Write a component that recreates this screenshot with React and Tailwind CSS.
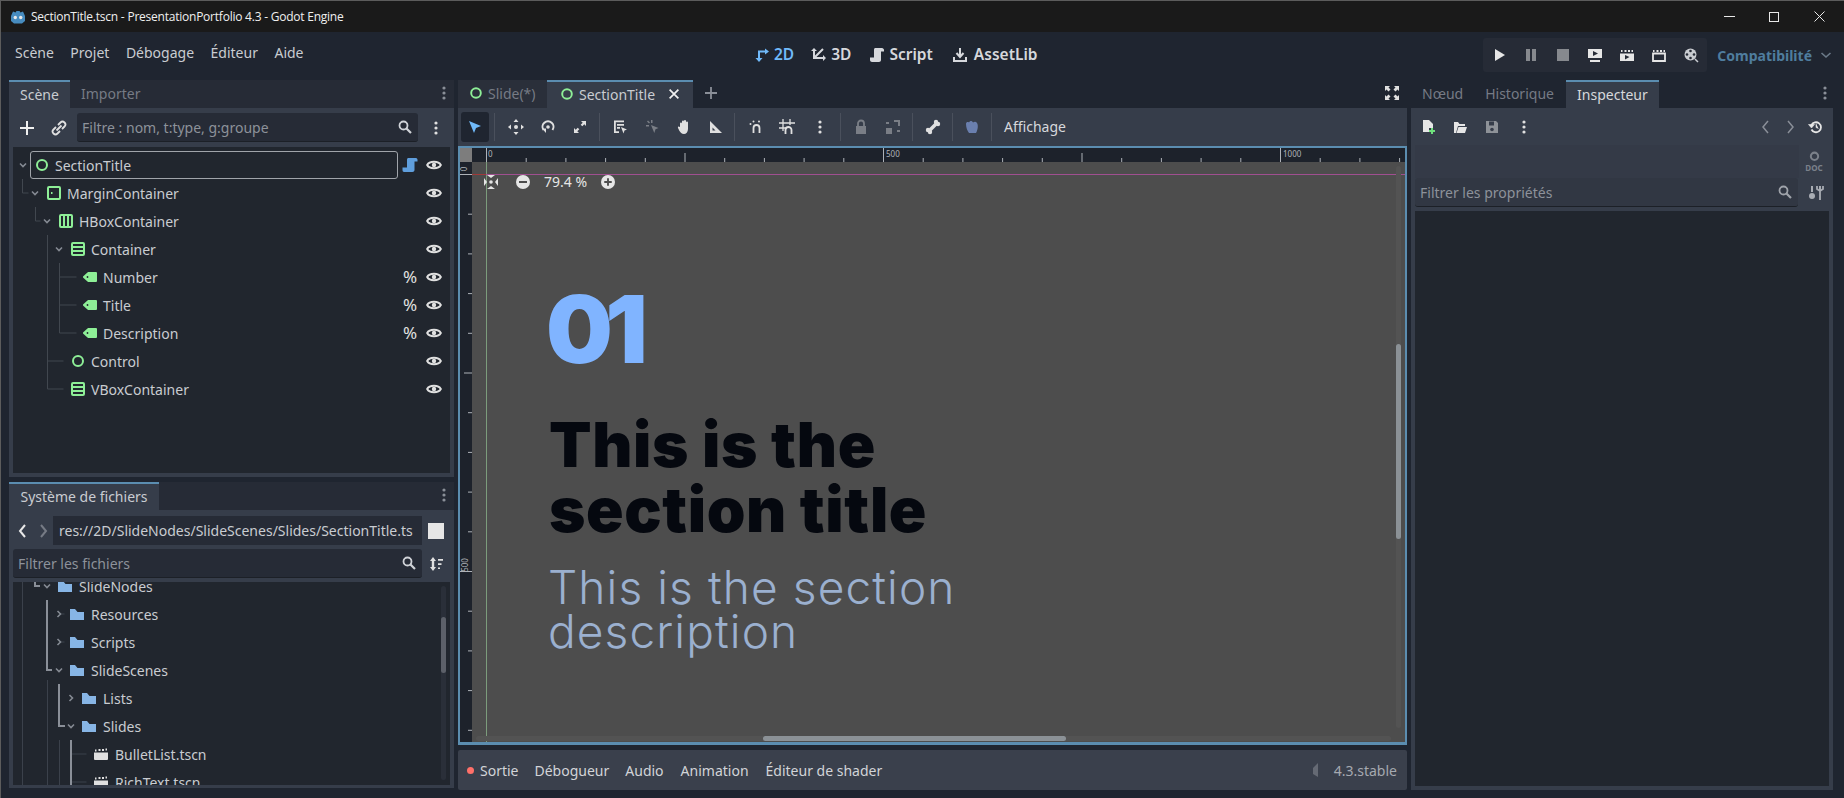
const GREEN = '#8eef97';

const Icon = ({ size = 16, className = '', children }) => (
  <svg width={size} height={size} viewBox="0 0 16 16" className={`shrink-0 ${className}`}>
    {children}
  </svg>
);

// node icons from the scene tree
const NodeCircle = () => (
  <Icon><circle cx="8" cy="8" r="5" fill="none" stroke={GREEN} strokeWidth="2" /></Icon>
);
const MarginIcon = () => (
  <Icon>
    <rect x="2" y="2" width="12" height="12" rx="1" fill="none" stroke={GREEN} strokeWidth="2" />
    <rect x="5" y="7" width="1.5" height="2" fill={GREEN} />
  </Icon>
);
const HBoxIcon = () => (
  <Icon>
    <rect x="2" y="2" width="12" height="12" rx="1" fill="none" stroke={GREEN} strokeWidth="2" />
    <path d="M6 2v12M10 2v12" stroke={GREEN} strokeWidth="2" />
  </Icon>
);
const VBoxIcon = () => (
  <Icon>
    <rect x="2" y="2" width="12" height="12" rx="1" fill="none" stroke={GREEN} strokeWidth="2" />
    <path d="M2 6h12M2 10h12" stroke={GREEN} strokeWidth="2" />
  </Icon>
);
const LabelIcon = () => (
  <Icon>
    <path d="M6 3h8a1 1 0 0 1 1 1v8a1 1 0 0 1-1 1H6L1 8.5V7.5z" fill={GREEN} />
    <circle cx="5.5" cy="8" r="0.9" fill="#21262e" />
  </Icon>
);
const Eye = () => (
  <Icon>
    <path d="M1.2 8C3.4 3.700 12.600 3.700 14.800 8 12.600 12.300 3.400 12.300 1.200 8z" fill="none" stroke="#e0e0e0" strokeWidth="2" />
    <circle cx="8" cy="8" r="2.200" fill="#e0e0e0" />
  </Icon>
);
const ScriptBlue = () => (
  <Icon>
    <path d="M6 1h8c1 0 1.500 1 1.500 2v1.500h-3V13c0 1-1 2-2 2H2c-1 0-1.500-1-1.500-2v-2.500H5V3c0-1 .4-2 1-2z" fill="#5f9edc" />
  </Icon>
);
const Folder = () => (
  <Icon>
    <path d="M1 3h5l2.500 3H15v8H1z" fill="#87b5e5" />
  </Icon>
);
const Clapper = () => (
  <Icon>
    <path d="M1 6.500h14V13a1 1 0 0 1-1 1H2a1 1 0 0 1-1-1z" fill="#e0e0e0" />
    <path d="M2 3.500h1.500v2H2zM5.500 3h2v2h-2zM9 3h2v2H9zM12.500 2.500H14v2h-1.500z" fill="#e0e0e0" />
  </Icon>
);
const Search = ({ color = '#d0d3d8' }) => (
  <Icon>
    <circle cx="6.500" cy="6.500" r="4" fill="none" stroke={color} strokeWidth="1.800" />
    <path d="M9.500 9.500 14 14" stroke={color} strokeWidth="2.200" />
  </Icon>
);
const Kebab = ({ color = '#e0e0e0' }) => (
  <Icon>
    <circle cx="8" cy="3" r="1.600" fill={color} />
    <circle cx="8" cy="8" r="1.600" fill={color} />
    <circle cx="8" cy="13" r="1.600" fill={color} />
  </Icon>
);
const Chevron = ({ open }) => (
  <svg width="10" height="10" viewBox="0 0 10 10" className="shrink-0">
    <path d={open ? 'M2 3.500 5 6.500 8 3.500' : 'M3.500 2 6.500 5 3.500 8'} fill="none" stroke="#858a93" strokeWidth="1.600" />
  </svg>
);

const sceneRows = [
  { name: 'SectionTitle', depth: 0, icon: NodeCircle, open: true, script: true },
  { name: 'MarginContainer', depth: 1, icon: MarginIcon, open: true },
  { name: 'HBoxContainer', depth: 2, icon: HBoxIcon, open: true },
  { name: 'Container', depth: 3, icon: VBoxIcon, open: true },
  { name: 'Number', depth: 4, icon: LabelIcon, percent: true },
  { name: 'Title', depth: 4, icon: LabelIcon, percent: true },
  { name: 'Description', depth: 4, icon: LabelIcon, percent: true },
  { name: 'Control', depth: 3, icon: NodeCircle },
  { name: 'VBoxContainer', depth: 3, icon: VBoxIcon },
];

const fileRows = [
  { name: 'SlideNodes', depth: 2, icon: Folder, open: true },
  { name: 'Resources', depth: 3, icon: Folder, closed: true },
  { name: 'Scripts', depth: 3, icon: Folder, closed: true },
  { name: 'SlideScenes', depth: 3, icon: Folder, open: true },
  { name: 'Lists', depth: 4, icon: Folder, closed: true },
  { name: 'Slides', depth: 4, icon: Folder, open: true },
  { name: 'BulletList.tscn', depth: 5, icon: Clapper },
  { name: 'RichText.tscn', depth: 5, icon: Clapper },
];

const SceneRow = ({ row }) => {
  const RowIcon = row.icon;
  return (
    <div className="flex h-[28px] items-center" style={{ paddingLeft: 5 + row.depth * 12 }}>
      <span className="mr-[2px] flex w-[10px] justify-center">
        {(row.open || row.closed) && <Chevron open={row.open} />}
      </span>
      <div className={`flex h-[28px] flex-1 items-center gap-[5px] rounded-[3px] border pl-[3px] ${row.depth === 0 ? 'border-[#a0a4aa]' : 'border-transparent'}`}>
        <RowIcon />
        <span className="text-[14px] text-[#c9ccd1]">{row.name}</span>
      </div>
      <div className="flex w-[52px] items-center">
        <span className="flex w-[24px] justify-center text-[17px] text-[#e0e0e0]">
          {row.percent && '%'}
          {row.script && <ScriptBlue />}
        </span>
        <span className="flex w-[24px] justify-center"><Eye /></span>
      </div>
    </div>
  );
};

const FileRow = ({ row }) => {
  const RowIcon = row.icon;
  return (
    <div className="flex h-[28px] items-center" style={{ paddingLeft: 5 + row.depth * 12 }}>
      <span className="mr-[5px] flex w-[10px] justify-center">
        {(row.open || row.closed) && <Chevron open={row.open} />}
      </span>
      <RowIcon />
      <span className="ml-[6px] text-[14px] text-[#c9ccd1]">{row.name}</span>
    </div>
  );
};

const SearchInput = ({ placeholder, className, iconColor }) => (
  <div className={`flex items-center justify-between rounded-[3px] border-b border-[#1c2027] px-[5px] ${className}`}>
    <span className="text-[14px] text-[#8d929a]">{placeholder}</span>
    <Search color={iconColor} />
  </div>
);

// the top-left scene dock
const SceneDock = () => (
  <section className="flex h-[397px] flex-col">
    <div className="flex h-[28px] shrink-0 items-center bg-[#262b36]">
      <div className="flex h-full w-[61px] items-center justify-center border-t-2 border-[#5b8db0] bg-[#363d4a] pb-[2px] text-[14px] text-[#c9ccd1]">Scène</div>
      <span className="mb-[2px] ml-[11px] text-[14px] text-[#767b85]">Importer</span>
      <span className="mb-[2px] ml-auto mr-[2px]"><Kebab color="#8a8f98" /></span>
    </div>
    <div className="flex min-h-0 flex-1 flex-col bg-[#363d4a] px-[4px] pb-[4px]">
      <div className="flex h-[39px] shrink-0 items-center">
        <span className="ml-[6px] w-[16px]">
          <Icon><path d="M8 1v14M1 8h14" stroke="#f0f0f0" strokeWidth="2" /></Icon>
        </span>
        <span className="ml-[16px]">
          <Icon>
            <path d="M7 5 9.500 2.500a2.800 2.800 0 0 1 4 4L11 9M9 11l-2.500 2.500a2.800 2.800 0 0 1-4-4L5 7M5.500 10.500l5-5" fill="none" stroke="#e0e0e0" strokeWidth="1.800" />
          </Icon>
        </span>
        <SearchInput placeholder="Filtre : nom, t:type, g:groupe" className="ml-[10px] h-[29px] w-[341px] bg-[#262b36]" />
        <span className="ml-[10px]"><Kebab /></span>
      </div>
      <div className="relative flex-1 bg-[#21262e]">
        <svg className="absolute left-0 top-0" width="437" height="326" viewBox="13 147 437 326" fill="none" stroke="#41474f">
          <path d="M22.500 179v14h6M35.500 207v14h5M47.500 235v154h16M47.500 361h16M59.500 263v70h17M59.500 277h17M59.500 305h17" />
        </svg>
        <div className="relative pt-[4px]">
          {sceneRows.map((row) => (
            <SceneRow key={row.name} row={row} />
          ))}
        </div>
      </div>
    </div>
  </section>
);

// bottom-left file system dock
const FileDock = () => (
  <section className="flex h-[306px] flex-col">
    <div className="flex h-[28px] shrink-0 items-center bg-[#262b36]">
      <div className="flex h-full w-[150px] items-center justify-center border-t-2 border-[#5b8db0] bg-[#363d4a] pb-[2px] text-[14px] text-[#c9ccd1]">Système de fichiers</div>
      <span className="mb-[2px] ml-auto mr-[2px]"><Kebab color="#8a8f98" /></span>
    </div>
    <div className="flex min-h-0 flex-1 flex-col bg-[#363d4a] px-[4px] pb-[3px]">
      <div className="mt-[6px] flex h-[29px] shrink-0 items-center">
        <svg width="40" height="16" viewBox="0 0 40 16" className="shrink-0">
          <path d="M12 2 7 8l5 6" fill="none" stroke="#e8e8e8" strokeWidth="2" />
          <path d="M28 2l5 6-5 6" fill="none" stroke="#767b85" strokeWidth="2" />
        </svg>
        <div className="flex h-[29px] w-[369px] items-center overflow-hidden whitespace-nowrap bg-[#262b36] pl-[6px] text-[14px] text-[#c9ccd1]">res://2D/SlideNodes/SlideScenes/Slides/SectionTitle.ts</div>
        <span className="ml-[6px] h-[16px] w-[16px] bg-[#e6e6e6]" />
      </div>
      <div className="mt-[4px] flex h-[29px] shrink-0 items-center">
        <SearchInput placeholder="Filtrer les fichiers" className="h-[29px] w-[409px] bg-[#262b36]" />
        <span className="ml-[6px]">
          <Icon>
            <path d="M5 1 8 5H6.200v6H8l-3 4-3-4h1.800V5H2z" fill="#e0e0e0" />
            <path d="M10 3h5v1.700h-5zM10 7.200h3.500v1.700H10zM10 11.400h2v1.700h-2z" fill="#e0e0e0" />
          </Icon>
        </span>
      </div>
      <div className="relative mt-[4px] min-h-0 flex-1 overflow-hidden bg-[#21262e]">
        <svg className="absolute left-0 top-0" width="437" height="203" viewBox="13 582 437 203" fill="none">
          <path d="M22.500 582v203M47.500 680v105M59.500 740v45M59.500 614h5M59.500 642h5M71.500 754h15M71.500 782h15" stroke="#3b414b" />
          <path d="M35 582v4h5M47 600v70h5M59 684v42h6M71 740v45" stroke="#8a8f98" strokeWidth="2" />
        </svg>
        <div className="relative -mt-[10px]">
          {fileRows.map((row) => (
            <FileRow key={row.name} row={row} />
          ))}
        </div>
        <div className="absolute right-[4px] top-[4px] h-[194px] w-[5px] rounded-full bg-[#2a2f39]">
          <div className="mt-[31px] h-[56px] w-[5px] rounded-full bg-[#5c6069]" />
        </div>
      </div>
    </div>
  </section>
);

const ToolIcon = ({ x, dim, children }) => (
  <span className={`flex h-[16px] w-[16px] ${dim ? 'opacity-40' : ''}`} style={{ marginLeft: x }}>
    <Icon>{children}</Icon>
  </span>
);

const Sep = ({ x }) => <span className="h-[28px] w-px bg-[#4a505c]" style={{ marginLeft: x }} />;

const f = '#e0e0e0';

const ViewToolbar = () => (
  <div className="flex h-[38px] items-center bg-[#363d4a]">
    <span className="ml-[3px] flex h-[30px] w-[28px] items-center justify-center rounded-[3px] bg-[#1f2530]">
      <Icon><path d="M2 2l12 5-5 2-2 5z" fill="#70bafa" /></Icon>
    </span>
    <Sep x={5} />
    <ToolIcon x={13}>
      <path d="M8 0l2.500 3h-5zM8 16l-2.500-3h5zM0 8l3-2.500v5zM16 8l-3 2.500v-5z" fill={f} />
      <circle cx="8" cy="8" r="2" fill={f} />
    </ToolIcon>
    <ToolIcon x={16}>
      <path d="M3.500 11a5.500 5.500 0 1 1 9 0" fill="none" stroke={f} strokeWidth="2" />
      <circle cx="8" cy="8" r="1.800" fill={f} />
      <path d="M2 9.500h4V14z" fill={f} />
    </ToolIcon>
    <ToolIcon x={16}>
      <path d="M9 2h5v5l-1.700-1.700-2 2-1.600-1.600 2-2zM7 14H2V9l1.700 1.700 2-2 1.600 1.600-2 2z" fill={f} />
    </ToolIcon>
    <Sep x={11} />
    <ToolIcon x={12}>
      <path d="M2 1.500h10v1.800H3.800v9H7V14H2zM5 5h7v1.700H5zM5 8h3v1.700H5z" fill={f} />
      <path d="M9 8l6 2.500-2.500 1-1 3z" fill={f} />
    </ToolIcon>
    <ToolIcon x={16} dim>
      <path d="M7 1h1.500v3H7zM2 6h3v1.500H2zM3 2.500l1-1 2 2-1 1z" fill={f} />
      <path d="M7 6l7.500 3-3 1.200-1.200 3.800z" fill={f} />
    </ToolIcon>
    <ToolIcon x={16}>
      <path d="M4 8V4.500a1 1 0 0 1 2 0V2.500a1 1 0 0 1 2 0V2a1 1 0 0 1 2 0v1.500a1 1 0 0 1 2 0V10c0 3-2 5-4 5-2.500 0-3.500-1.500-4.500-3L2 9c-.5-1 .8-2 1.500-1z" fill={f} />
    </ToolIcon>
    <ToolIcon x={16}>
      <path d="M2 2l12 12H2z" fill={f} />
      <path d="M4.500 8.500v3h3z" fill="#363d4a" />
    </ToolIcon>
    <Sep x={10} />
    <ToolIcon x={13}>
      <path d="M5.500 14V9a3 3 0 0 1 6 0v5" fill="none" stroke={f} strokeWidth="1.800" />
      <circle cx="2.500" cy="5" r="1" fill={f} /><circle cx="5.500" cy="2.500" r="1" fill={f} /><circle cx="11" cy="2.500" r="1" fill={f} />
    </ToolIcon>
    <ToolIcon x={15}>
      <path d="M0 4h16M0 9h8M4 0v12M11 0v6" stroke={f} strokeWidth="1.300" />
      <path d="M6.500 15v-4a3 3 0 0 1 6 0v4" fill="none" stroke={f} strokeWidth="1.800" />
    </ToolIcon>
    <span className="ml-[17px]"><Kebab /></span>
    <Sep x={12} />
    <ToolIcon x={12} dim>
      <path d="M3 7h10v8H3z" fill={f} />
      <path d="M5 7V4.500a3 3 0 0 1 6 0V7" fill="none" stroke={f} strokeWidth="1.800" />
    </ToolIcon>
    <ToolIcon x={16} dim>
      <path d="M9 1h6v6h-2V3H9zM1 9h6v6H1z" fill={f} />
      <path d="M1 4h3M12 12h3" stroke={f} strokeWidth="2" />
    </ToolIcon>
    <Sep x={11} />
    <ToolIcon x={12}>
      <path d="M4.500 11.500l7-7" stroke={f} strokeWidth="3.600" />
      <circle cx="3" cy="11" r="2.200" fill={f} /><circle cx="5" cy="13" r="2.200" fill={f} />
      <circle cx="11" cy="3" r="2.200" fill={f} /><circle cx="13" cy="5" r="2.200" fill={f} />
    </ToolIcon>
    <Sep x={11} />
    <ToolIcon x={11}>
      <path d="M2 5c0-2 2-2.500 3-1.500C6 1.500 8 1.500 9 3.500c1.500-1 3-1 4 .5s1 4 .5 6-1 3-1.500 4H5c-1.500-2-3-5-3-9z" fill="#6a7fae" />
    </ToolIcon>
    <Sep x={11} />
    <span className="mb-[2px] ml-[12px] text-[14px] text-[#d6d8dc]">Affichage</span>
  </div>
);

const rulerTicks = Array.from({ length: 24 }, (_, i) => i);

// the 2D viewport with rulers and the slide preview
const Viewport = () => (
  <div className="relative h-[599px] overflow-hidden border-2 border-b-[3px] border-[#5b8db0] bg-[#1d222b]">
    <div className="absolute left-0 top-0 h-[14px] w-[12px] bg-[#7d7d7d]" />
    <svg className="absolute left-0 top-0" width="945" height="595" viewBox="0 0 945 595" fill="none">
      {rulerTicks.map((i) => {
        const x = 26.500 + i * 39.7;
        const h = i % 10 === 0 ? 14 : i % 5 === 0 ? 9 : 4;
        return <path key={i} d={`M${x} ${14 - h}V14`} stroke="#aeb2b8" />;
      })}
      {rulerTicks.slice(0, 15).map((i) => {
        const y = 26.500 + i * 39.7;
        const h = i % 10 === 0 ? 12 : i % 5 === 0 ? 8 : 4;
        return <path key={i} d={`M${12 - h} ${y}H12`} stroke="#aeb2b8" />;
      })}
    </svg>
    <span className="absolute left-[28px] top-0 text-[8px] leading-[12px] text-[#aeb2b8]">0</span>
    <span className="absolute left-[426px] top-0 text-[8px] leading-[12px] text-[#aeb2b8]">500</span>
    <span className="absolute left-[823px] top-0 text-[8px] leading-[12px] text-[#aeb2b8]">1000</span>
    <span className="absolute left-[2px] top-[17px] -rotate-90 text-[8px] leading-[8px] text-[#aeb2b8]">0</span>
    <span className="absolute left-[-2px] top-[413px] -rotate-90 text-[8px] leading-[8px] text-[#aeb2b8]">500</span>

    <div className="absolute bottom-0 left-[12px] right-0 top-[14px] bg-[#4d4d4d]">
      <span className="absolute bottom-0 left-[14px] top-0 w-px bg-[#7c9c7c]" />
      <span className="absolute left-0 top-[12px] h-px w-[14px] bg-[#a03a3a]" />
      <span className="absolute left-[14px] right-0 top-[12px] h-px bg-[#a04f90]" />

      <div className="absolute left-[11px] top-[12px] flex items-center">
        <Icon>
          <path d="M1 4l3 4-3 4zM15 4l-3 4 3 4zM4 1l4 3 4-3zM4 15l4-3 4 3z" fill="#e6e6e6" />
          <circle cx="8" cy="8" r="1.800" fill="#e6e6e6" />
        </Icon>
        <span className="ml-[17px] flex h-[14px] w-[14px] items-center justify-center rounded-full bg-[#e6e6e6]">
          <span className="h-[2px] w-[8px] bg-[#4d4d4d]" />
        </span>
        <span className="ml-[14px] w-[46px] text-[14px] leading-[16px] text-[#e6e6e6]">79.4 %</span>
        <span className="relative ml-[11px] flex h-[14px] w-[14px] items-center justify-center rounded-full bg-[#e6e6e6]">
          <Icon size={10}><path d="M8 2v12M2 8h12" stroke="#4d4d4d" strokeWidth="3" /></Icon>
        </span>
      </div>

      <div className="absolute left-[74px] top-[120px] font-['Inter',sans-serif] text-[94px] font-black leading-[94px] tracking-[-0.08em] text-[#80b4ff]">01</div>
      <div className="absolute left-[77px] top-[250px] w-[420px] font-['Inter',sans-serif] text-[62px] font-black leading-[65px] tracking-[0.01em] text-[#05080f]">
        This is the<br />section title
      </div>
      <div className="absolute left-[76px] top-[403px] w-[460px] font-['Inter',sans-serif] text-[46px] font-light leading-[44px] tracking-[0.024em] text-[#9bb0cf]">
        This is the section<br />description
      </div>

      <div className="absolute bottom-[1px] left-[4px] right-[14px] h-[5px] rounded-full bg-[#535353]">
        <div className="ml-[287px] h-[5px] w-[303px] rounded-full bg-[#8b9196]" />
      </div>
      <div className="absolute bottom-[14px] right-[4px] top-[4px] w-[5px] rounded-full bg-[#535353]">
        <div className="mt-[178px] h-[195px] w-[5px] rounded-full bg-[#8b9196]" />
      </div>
    </div>
  </div>
);

const CenterColumn = () => (
  <section className="flex flex-col">
    <div className="flex h-[28px] items-center">
      <div className="flex h-full w-[89px] items-center gap-[5px] bg-[#2a2f3a] pb-[2px] pl-[11px] text-[14px] text-[#767b85]">
        <Icon size={14}><circle cx="8" cy="8" r="5.500" fill="none" stroke={GREEN} strokeWidth="2.200" /></Icon>
        Slide(*)
      </div>
      <div className="flex h-full w-[146px] items-center gap-[5px] border-t-2 border-[#5b8db0] bg-[#363d4a] pb-[2px] pl-[13px] text-[14px] text-[#c9ccd1]">
        <Icon size={14}><circle cx="8" cy="8" r="5.500" fill="none" stroke={GREEN} strokeWidth="2.200" /></Icon>
        SectionTitle
        <span className="ml-[7px]">
          <Icon size={14}><path d="M3 3l10 10M13 3 3 13" stroke="#f0f0f0" strokeWidth="2" /></Icon>
        </span>
      </div>
      <span className="mb-[2px] ml-[10px]">
        <Icon><path d="M8 2v12M2 8h12" stroke="#8a8f98" strokeWidth="1.800" /></Icon>
      </span>
      <span className="mb-[2px] ml-auto mr-[7px]">
        <Icon>
          <path d="M1 1h5L4.500 2.500l2 2-2 2-2-2L1 6zM15 1v5l-1.500-1.500-2 2-2-2 2-2L10 1zM1 15v-5l1.500 1.500 2-2 2 2-2 2L6 15zM15 15h-5l1.500-1.500-2-2 2-2 2 2L15 10z" fill="#e0e0e0" />
        </Icon>
      </span>
    </div>
    <ViewToolbar />
    <Viewport />
    <div className="mt-[5px] flex h-[40px] items-center rounded-[2px] bg-[#3a404c] pl-[9px] pr-[10px] text-[14px] text-[#d2d4d8]">
      <span className="h-[7px] w-[7px] rounded-full bg-[#ff7069]" />
      <span className="ml-[6px]">Sortie</span>
      <span className="ml-[16px]">Débogueur</span>
      <span className="ml-[16px]">Audio</span>
      <span className="ml-[17px]">Animation</span>
      <span className="ml-[17px]">Éditeur de shader</span>
      <span className="ml-auto opacity-30">
        <Icon><path d="M10 1v14L5 12V6z" fill="#c9ccd1" /></Icon>
      </span>
      <span className="ml-[10px] text-[#a5a9b0]">4.3.stable</span>
    </div>
  </section>
);

const InspectorDock = () => (
  <section className="flex flex-col">
    <div className="flex h-[28px] items-center">
      <span className="mb-[2px] ml-[11px] text-[14px] text-[#767b85]">Nœud</span>
      <span className="mb-[2px] ml-[22px] text-[14px] text-[#767b85]">Historique</span>
      <div className="ml-[12px] flex h-full w-[93px] items-center justify-center border-t-2 border-[#5b8db0] bg-[#363d4a] pb-[2px] text-[14px] text-[#d6d8dc]">Inspecteur</div>
      <span className="mb-[2px] ml-auto"><Kebab color="#8a8f98" /></span>
    </div>
    <div className="flex h-[682px] flex-col bg-[#363d4a] px-[4px] pb-[4px]">
      <div className="flex h-[37px] items-center">
        <span className="ml-[5px]">
          <Icon>
            <path d="M3 1h6l4 4v4H9v4H3z" fill="#e6e6e6" />
            <path d="M12 9v6M9 12h6" stroke="#6ee07c" strokeWidth="2" />
          </Icon>
        </span>
        <span className="ml-[16px]">
          <Icon><path d="M2 3h4l1.500 2H13v2H6l-2 7H2zM6.500 8H15l-2 6H4.500z" fill="#e6e6e6" /></Icon>
        </span>
        <span className="ml-[16px] opacity-50">
          <Icon><path d="M2 2h10l2 2v10H2zM5 2.500h5v4H5z" fill="#e6e6e6" fillRule="evenodd" /><circle cx="8" cy="10.500" r="1.800" fill="#363d4a" /></Icon>
        </span>
        <span className="ml-[16px]"><Kebab /></span>
        <span className="ml-auto flex items-center">
          <svg width="40" height="16" viewBox="0 0 40 16">
            <path d="M9 2 4 8l5 6M29 2l5 6-5 6" fill="none" stroke="#8a8f98" strokeWidth="1.500" />
          </svg>
          <span className="ml-[9px]">
            <Icon>
              <path d="M3.500 6a5 5 0 1 1 0 4.500" fill="none" stroke="#e6e6e6" strokeWidth="1.800" />
              <path d="M0.500 5.500h6L3.500 9zM8 4.500v4l2.500 1" fill="#e6e6e6" stroke="#e6e6e6" strokeWidth="0.600" />
            </Icon>
          </span>
          <span className="w-[5px]" />
        </span>
      </div>
      <div className="flex h-[33px] items-center justify-end bg-[#343a47]">
        <span className="flex h-[33px] w-[30px] flex-col items-center justify-center bg-[#363d4a]">
          <Icon size={13}>
            <circle cx="8" cy="6.500" r="4.500" fill="none" stroke="#7b818a" strokeWidth="2.500" />
          </Icon>
          <span className="text-[8px] font-bold leading-[8px] text-[#7b818a]">DOC</span>
        </span>
      </div>
      <div className="flex h-[29px] items-center">
        <SearchInput placeholder="Filtrer les propriétés" className="h-[29px] flex-1 bg-[#313743]" iconColor="#9fa3aa" />
        <span className="ml-[10px] mr-[5px] w-[16px]">
          <Icon>
            <path d="M4 1v6M12 1v4" stroke="#a8acb3" strokeWidth="2" />
            <circle cx="4" cy="11" r="3" fill="#a8acb3" />
            <path d="M9 1v3l3 2 3-2V1M12 6v9" fill="none" stroke="#a8acb3" strokeWidth="1.800" />
          </Icon>
        </span>
      </div>
      <div className="mt-[4px] flex-1 bg-[#21262e]" />
    </div>
  </section>
);

export default function App() {
  return (
    <div className="flex h-[798px] w-[1844px] flex-col overflow-hidden border-l border-t border-[#5c5c5c] bg-[#1f2530] font-['Noto_Sans',sans-serif]">
      <div className="flex h-[31px] items-center bg-[#1a1a1a]">
        <svg width="16" height="16" viewBox="0 0 16 16" className="ml-[9px] shrink-0">
          <path d="M1 7 3 2.500l2.500 1 1-1.500h3l1 1.500 2.500-1L15 7v5l-3 2.500H4L1 12z" fill="#478cbf" />
          <circle cx="5.300" cy="8.500" r="1.700" fill="#e8e8e8" />
          <circle cx="10.700" cy="8.500" r="1.700" fill="#e8e8e8" />
        </svg>
        <span className="ml-[5px] font-['Open_Sans',sans-serif] text-[12px] tracking-[-0.23px] text-[#f0f0f0]">SectionTitle.tscn - PresentationPortfolio 4.3 - Godot Engine</span>
        <div className="ml-auto flex items-center">
          <span className="h-px w-[11px] bg-[#e8e8e8]" />
          <span className="ml-[34px] h-[10px] w-[10px] border border-[#e8e8e8]" />
          <svg width="11" height="11" viewBox="0 0 11 11" className="ml-[35px] mr-[19px]">
            <path d="M.5.500l10 10M10.500.500l-10 10" stroke="#e8e8e8" />
          </svg>
        </div>
      </div>

      <div className="flex h-[48px] items-center pb-[2px]">
        <nav className="mb-[6px] flex w-[753px] gap-[16.500px] pl-[14px] text-[14px] text-[#c9ccd1]">
          <span>Scène</span>
          <span>Projet</span>
          <span>Débogage</span>
          <span>Éditeur</span>
          <span>Aide</span>
        </nav>
        <div className="flex items-center text-[15.500px] font-semibold text-[#d6d8dc]">
          <span className="flex items-center gap-[4px] text-[#70bafa]">
            <Icon>
              <path d="M5 13V4.500h7" fill="none" stroke="#70bafa" strokeWidth="2" />
              <path d="M11 1.500 15 4.500l-4 3zM1.500 11h7L5 15z" fill="#70bafa" />
            </Icon>
            2D
          </span>
          <span className="ml-[17px] flex items-center gap-[4px]">
            <Icon>
              <path d="M3 2v9h9M3 11l9-9" fill="none" stroke="#d6d8dc" strokeWidth="2" />
              <path d="M0 4l3-3 3 3zM12 8l3 3-3 3z" fill="#d6d8dc" />
            </Icon>
            3D
          </span>
          <span className="ml-[18px] flex items-center gap-[4px]">
            <Icon>
              <path d="M6 1h7c1 0 2 1 2 2v1.500h-3V13c0 1-1 2-2 2H3c-1 0-2-1-2-2v-2.500h4V3c0-1 .4-2 1-2z" fill="#d6d8dc" />
            </Icon>
            Script
          </span>
          <span className="ml-[19px] flex items-center gap-[6px]">
            <Icon>
              <path d="M8 1v8M4.500 6 8 10l3.500-4" fill="none" stroke="#d6d8dc" strokeWidth="2" />
              <path d="M2 10v4h12v-4" fill="none" stroke="#d6d8dc" strokeWidth="2" />
            </Icon>
            AssetLib
          </span>
        </div>
        <div className="ml-auto flex h-[34px] w-[224px] items-center rounded-[3px] bg-[#262b36]">
          <span className="flex w-[32px] justify-center"><Icon><path d="M4 2l10 6-10 6z" fill="#e6e6e6" /></Icon></span>
          <span className="flex w-[32px] justify-center opacity-50"><Icon><path d="M3 2h4v12H3zM9 2h4v12H9z" fill="#e6e6e6" /></Icon></span>
          <span className="flex w-[32px] justify-center opacity-50"><Icon><path d="M2 2h12v12H2z" fill="#e6e6e6" /></Icon></span>
          <span className="flex w-[32px] justify-center"><Icon><path d="M1 2h14v9H1z" fill="#e6e6e6" /><path d="M3 13h10v2H3z" fill="#e6e6e6" /><path d="M6 4l5 2.500L6 9z" fill="#262b36" /></Icon></span>
          <span className="flex w-[32px] justify-center">
            <Icon>
              <path d="M1 6.500h14V14H1z" fill="#e6e6e6" />
              <path d="M2 3h1.500v2H2zM5.500 3h2v2h-2zM9 3h2v2H9zM12.500 3H14v2h-1.500z" fill="#e6e6e6" />
              <path d="M6 8l4.500 2L6 12.500z" fill="#262b36" />
            </Icon>
          </span>
          <span className="flex w-[32px] justify-center">
            <Icon>
              <path d="M2 6.500h12v7.500H2z" fill="none" stroke="#e6e6e6" strokeWidth="1.800" />
              <path d="M2 3h1.500v2H2zM5.500 3h2v2h-2zM9 3h2v2H9zM12.500 3H14v2h-1.500z" fill="#e6e6e6" />
            </Icon>
          </span>
          <span className="flex w-[32px] justify-center">
            <Icon>
              <circle cx="7.500" cy="7.500" r="6" fill="#c9ccd1" />
              <circle cx="7.500" cy="4" r="1.300" fill="#262b36" /><circle cx="4" cy="7.500" r="1.300" fill="#262b36" /><circle cx="11" cy="7.500" r="1.300" fill="#262b36" /><circle cx="7.500" cy="11" r="1.300" fill="#262b36" />
              <path d="M12 12l3 3" stroke="#c9ccd1" strokeWidth="1.500" />
            </Icon>
          </span>
        </div>
        <span className="ml-[10px] text-[14px] font-bold text-[#4f7d9e]">Compatibilité</span>
        <svg width="12" height="12" viewBox="0 0 12 12" className="ml-[8px] mr-[12px]">
          <path d="M1.500 4 6 8l4.500-4" fill="none" stroke="#6b7a88" strokeWidth="1.600" />
        </svg>
      </div>

      <main className="grid grid-cols-[445px_949px_422px] gap-x-[4px] pl-[8px]">
        <div className="flex flex-col gap-[5px]">
          <SceneDock />
          <FileDock />
        </div>
        <CenterColumn />
        <InspectorDock />
      </main>
    </div>
  );
}
